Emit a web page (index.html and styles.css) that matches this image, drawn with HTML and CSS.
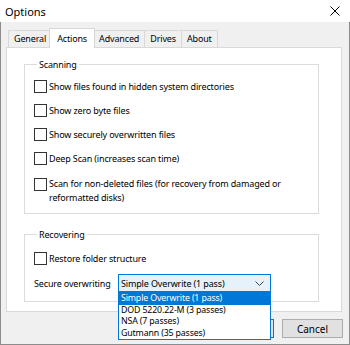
FILE: index.html
```html
<!DOCTYPE html>
<html lang="en">
<head>
    <meta charset="UTF-8">
    <title>Options</title>
    <link rel="stylesheet" href="styles.css">
</head>
<body>
    <div class="window">
        <div class="titlebar">
            <span class="title">Options</span>
            <svg class="close" width="10" height="10" viewBox="0 0 10 10"><path d="M0.5 0.5L9.5 9.5M9.5 0.5L0.5 9.5" stroke="#000" stroke-width="1"/></svg>
        </div>
        <div class="content">
            <div class="tabs">
                <div class="tab">General</div>
                <div class="tab active">Actions</div>
                <div class="tab">Advanced</div>
                <div class="tab">Drives</div>
                <div class="tab">About</div>
            </div>
            <div class="panel">
                <fieldset class="group scanning">
                    <legend>Scanning</legend>
                    <div class="check"><span class="box"></span><span>Show files found in hidden system directories</span></div>
                    <div class="check"><span class="box"></span><span>Show zero byte files</span></div>
                    <div class="check"><span class="box"></span><span>Show securely overwritten files</span></div>
                    <div class="check"><span class="box"></span><span>Deep Scan (increases scan time)</span></div>
                    <div class="check multi"><span class="box"></span><span>Scan for non-deleted files (for recovery from damaged or reformatted disks)</span></div>
                </fieldset>
                <fieldset class="group recovering">
                    <legend>Recovering</legend>
                    <div class="check"><span class="box"></span><span>Restore folder structure</span></div>
                    <div class="field">
                        <span class="label">Secure overwriting</span>
                        <div class="combo">
                            <div class="combo-value">
                                <span>Simple Overwrite (1 pass)</span>
                                <svg width="9" height="5" viewBox="0 0 9 5"><path d="M0.5 0.5L4.5 4.5L8.5 0.5" fill="none" stroke="#444" stroke-width="1"/></svg>
                            </div>
                            <ul class="combo-list">
                                <li class="selected">Simple Overwrite (1 pass)</li>
                                <li>DOD 5220.22-M (3 passes)</li>
                                <li>NSA (7 passes)</li>
                                <li>Gutmann (35 passes)</li>
                            </ul>
                        </div>
                    </div>
                </fieldset>
            </div>
            <div class="buttons">
                <button class="default">OK</button>
                <button>Cancel</button>
            </div>
        </div>
    </div>
</body>
</html>
```

FILE: styles.css
```css
body {
    margin: 0;
    font-family: 'Noto Sans', sans-serif;
    font-size: 9px;
    letter-spacing: -0.15px;
    color: #000;
    background: #fff;
}

.window {
    width: 350px;
    height: 345px;
    box-sizing: border-box;
    border: 1px solid #8c8c8c;
    border-top: none;
    background: #f0f0f0;
    display: flex;
    flex-direction: column;
}

.titlebar {
    height: 22px;
    background: #fff;
    display: flex;
    align-items: center;
    justify-content: space-between;
    padding: 0 10px 0 5px;
    margin: 0 -1px;
}

.title {
    font-size: 11px;
    letter-spacing: 0;
}

.content {
    flex: 1;
    padding: 6px 7px 0 5px;
}

.tabs {
    display: flex;
    align-items: flex-end;
    height: 19px;
    padding-left: 2px;
}

.tab {
    height: 16px;
    line-height: 16px;
    padding: 0 5px;
    border: 1px solid #d9d9d9;
    border-bottom: none;
    margin-right: -1px;
    background: #f0f0f0;
}

.tab.active {
    height: 19px;
    line-height: 19px;
    background: #fff;
    position: relative;
    z-index: 1;
    margin-bottom: -1px;
    margin-left: -2px;
    margin-right: -2px;
    padding: 0 7px;
}

.panel {
    height: 265px;
    box-sizing: border-box;
    border: 1px solid #d9d9d9;
    background: #fff;
    padding: 10px 0 0 17px;
}

.group {
    width: 295px;
    box-sizing: border-box;
    margin: 0;
    border: 1px solid #dcdcdc;
    padding: 3px 9px 0;
}

.group legend {
    padding: 0 2px;
    margin-left: 3px;
    line-height: 13px;
}

.scanning {
    height: 156px;
}

.recovering {
    margin-top: 14px;
    height: 74px;
    padding-top: 5px;
}

.check {
    display: flex;
    align-items: center;
    height: 24px;
}

.check.multi {
    align-items: flex-start;
    height: auto;
    padding-top: 7px;
    line-height: 14px;
}

.box {
    flex: none;
    width: 11px;
    height: 11px;
    border: 1px solid #333;
    background: #fff;
    margin-right: 2px;
}

.check.multi .box {
    margin-top: 1px;
}

.field {
    display: flex;
    align-items: center;
    height: 26px;
}

.label {
    width: 84px;
}

.combo {
    position: relative;
    width: 153px;
}

.combo-value {
    height: 18px;
    box-sizing: border-box;
    border: 1px solid #0078d7;
    background: #e5f1fb;
    display: flex;
    align-items: center;
    justify-content: space-between;
    padding: 0 6px 0 2px;
}

.combo-list {
    position: absolute;
    top: 100%;
    left: 0;
    width: 100%;
    box-sizing: border-box;
    margin: 0;
    padding: 0;
    list-style: none;
    border: 1px solid #0078d7;
    background: #fff;
    z-index: 2;
}

.combo-list li {
    height: 11.5px;
    line-height: 11.5px;
    font-size: 8.8px;
    padding-left: 2px;
}

.combo-list li.selected {
    background: #0078d7;
    color: #fff;
}

.buttons {
    display: flex;
    justify-content: flex-end;
    gap: 8px;
    margin-top: 7px;
    margin-right: -1px;
}

.buttons button {
    width: 61px;
    height: 19px;
    font-family: inherit;
    font-size: 10px;
    background: #e1e1e1;
    border: 1px solid #adadad;
    padding: 0;
}

.buttons button.default {
    border-color: #0078d7;
}
```
